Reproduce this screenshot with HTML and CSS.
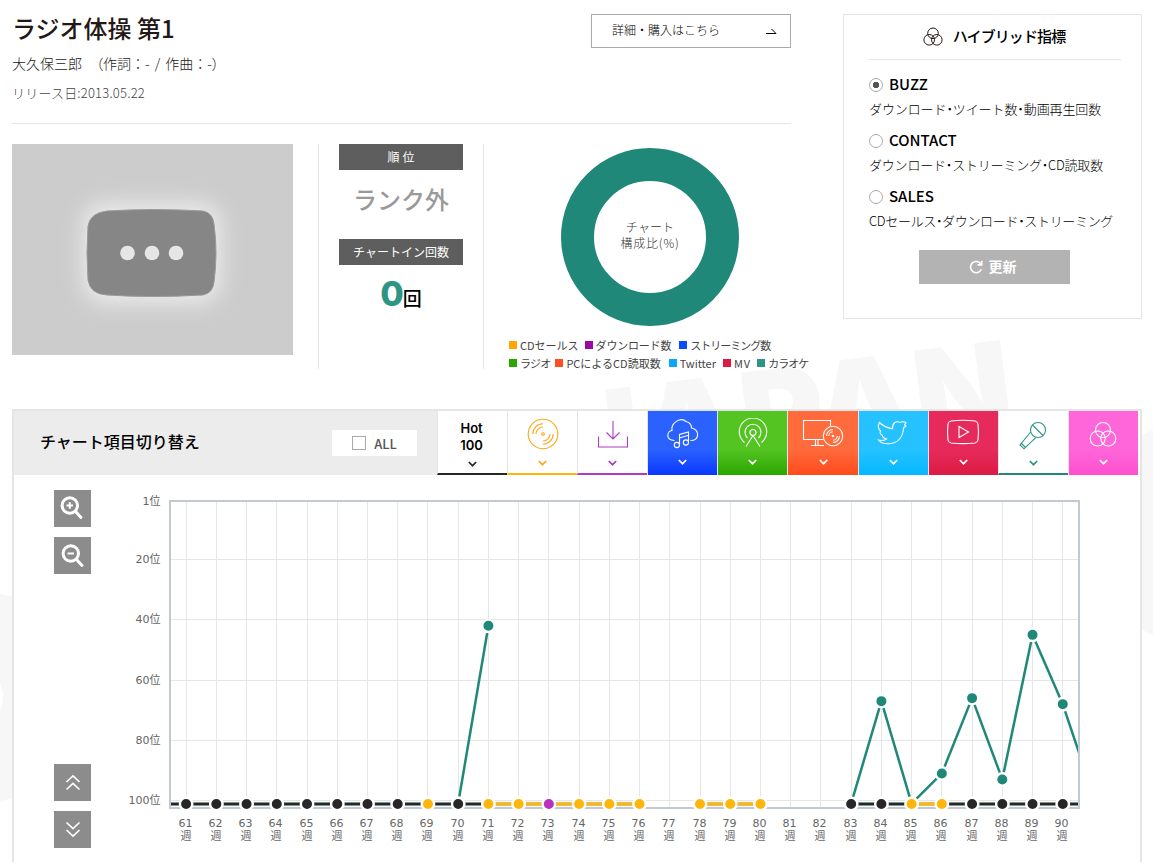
FILE: index.html
```html
<!DOCTYPE html>
<html lang="ja">
<head>
    <meta charset="UTF-8">
    <meta name="viewport" content="width=device-width, initial-scale=1.0">
    <title>ラジオ体操 第1</title>
    <link rel="stylesheet" href="styles.css">
</head>
<body>

    <!-- background logo -->
    <svg class="watermark" viewBox="0 0 1153 862">
        <text x="572" y="488" transform="rotate(-7.2 572 488)" textLength="449">JAPAN</text>
        <path d="M0 594Q8 595 20 600V796Q10 800 0 801V711Q6 697 0 683Z"/>
        <path d="M1153 430Q1130 440 1120 460V610Q1135 628 1153 635Z"/>
    </svg>

    <div class="page">
        <div class="top">
            <div class="song">
                <div class="song-head">
                    <div>
                        <h1>ラジオ体操 第1</h1>
                        <p class="artist">大久保三郎　<span>（</span>作詞：- / 作曲：-<span>）</span></p>
                        <p class="release">リリース日:2013.05.22</p>
                    </div>
                    <a class="buy"><span>詳細・購入はこちら</span>
                        <svg width="11" height="7" viewBox="0 0 11 7"><path d="M0 5.5H10L5.5 1"/></svg>
                    </a>
                </div>
                <div class="song-body">
                    <div class="thumb">
                        <svg width="281" height="211" viewBox="0 0 281 211">
                            <defs><filter id="glow" x="-50%" y="-50%" width="200%" height="200%"><feGaussianBlur stdDeviation="11"/></filter></defs>
                            <rect width="281" height="211" fill="#ccc"/>
                            <rect x="72" y="60" width="136" height="98" rx="20" fill="#eee" filter="url(#glow)"/>
                            <path d="M95 67Q140 64 191 67Q201 69 202 80Q206 109 202 138Q201 149 191 151Q140 154 95 151Q78 150 76 136Q74 109 76 82Q78 69 95 67Z" fill="#868686" stroke="#9a9a9a"/>
                            <g fill="#e6e6e6"><circle cx="115.500" cy="109" r="7.3"/><circle cx="140" cy="109" r="7.3"/><circle cx="164" cy="109" r="7.3"/></g>
                        </svg>
                    </div>
                    <div class="rank">
                        <div class="label wide">順位</div>
                        <div class="out">ランク外</div>
                        <div class="label">チャートイン回数</div>
                        <div class="count"><b>0</b>回</div>
                    </div>
                    <div class="ratio">
                        <div class="donut">チャート<br><span>構成比(%)</span></div>
                        <ul class="legend">
                            <li class="cd">CDセールス</li><li class="dl">ダウンロード数</li><li class="st">ストリーミング数</li>
                        </ul>
                        <ul class="legend second">
                            <li class="ra">ラジオ</li><li class="pc">PCによるCD読取数</li><li class="tw">Twitter</li><li class="mv">MV</li><li class="ka">カラオケ</li>
                        </ul>
                    </div>
                </div>
            </div>

            <div class="hybrid">
                <h2>
                    <svg width="20" height="20" viewBox="0 0 20 20"><circle cx="10" cy="6.3" r="5.3"/><circle cx="6.2" cy="12.8" r="5.3"/><circle cx="13.8" cy="12.8" r="5.3"/></svg>
                    <span>ハイブリッド指標</span>
                </h2>
                <label><i class="radio on"></i>BUZZ</label>
                <p class="d1">ダウンロード<i>・</i>ツイート数<i>・</i>動画再生回数</p>
                <label><i class="radio"></i>CONTACT</label>
                <p class="d2">ダウンロード<i>・</i>ストリーミング<i>・</i>CD読取数</p>
                <label><i class="radio"></i>SALES</label>
                <p class="d3">CDセールス<i>・</i>ダウンロード<i>・</i>ストリーミング</p>
                <div class="update">
                    <svg width="14" height="14" viewBox="0 0 14 14"><path d="M12.3 9.2A5.6 5.6 0 1 1 12 4.3M12.7 .8V4.9H8.6"/></svg>
                    <span>更新</span>
                </div>
            </div>
        </div>

        <div class="panel">
            <div class="panel-head">
                <div class="switch">
                    <h3>チャート項目切り替え</h3>
                    <div class="all"><i></i>ALL</div>
                </div>
                <div class="tab t-hot"><b>Hot<br>100</b><svg class="arw" viewBox="0 0 8 5"><path d="M.7 .7L4 4 7.3 .7"/></svg></div>
                <div class="tab t-cd">
                    <svg class="ic" viewBox="0 0 42 32"><circle cx="21" cy="16" r="14.8"/><circle cx="21" cy="16" r="1.3"/><path d="M10.8 16A10.2 10.2 0 0 1 21 5.8M14 16A7 7 0 0 1 21 9M31.200 16A10.200 10.200 0 0 1 21 26.200M28 16A7 7 0 0 1 21 23"/></svg>
                    <svg class="arw" viewBox="0 0 8 5"><path d="M.7 .7L4 4 7.3 .7"/></svg>
                </div>
                <div class="tab t-dl">
                    <svg class="ic" viewBox="0 0 42 32"><path d="M21 3V21M14.500 14.500L21 21 27.500 14.500M6.500 18.500V29H35.500V18.500"/></svg>
                    <svg class="arw" viewBox="0 0 8 5"><path d="M.7 .7L4 4 7.3 .7"/></svg>
                </div>
                <div class="tab fill t-st">
                    <svg class="ic" viewBox="0 0 42 32"><path d="M12.500 22.500C3 22 5 13 10 12.500C9 4 19 -1 24 3.500C28 4.500 29.500 7 29.500 10C38 12 37.500 22.500 28.500 22.500M17.500 27V16.500L26.500 14V24M17.500 20L26.500 17.300"/><circle cx="14.900" cy="27" r="2.600"/><circle cx="23.900" cy="24.500" r="2.600"/></svg>
                    <svg class="arw" viewBox="0 0 8 5"><path d="M.7 .7L4 4 7.3 .7"/></svg>
                </div>
                <div class="tab fill t-ra">
                    <svg class="ic" viewBox="0 0 42 32"><circle cx="21" cy="14.500" r="3"/><path d="M14 28.500L21 17.500 28 28.500M15.500 20A8 8 0 1 1 26.500 20M12.500 24.500A13.700 13.700 0 1 1 29.500 24.500"/></svg>
                    <svg class="arw" viewBox="0 0 8 5"><path d="M.7 .7L4 4 7.3 .7"/></svg>
                </div>
                <div class="tab fill t-pc">
                    <svg class="ic" viewBox="0 0 42 32"><path d="M21.500 21.500H1.500V2.500H28.500V8M13.500 21.500V27.500M16 21.500V27.500M9 27.500H22"/><circle cx="31" cy="18" r="9.700"/><circle cx="31" cy="18" r=".8"/><path d="M24.500 18A6.500 6.500 0 0 1 31 11.500M26.800 18A4.200 4.200 0 0 1 31 13.800M37.500 18A6.500 6.500 0 0 1 31 24.500M35.200 18A4.200 4.200 0 0 1 31 22.200"/></svg>
                    <svg class="arw" viewBox="0 0 8 5"><path d="M.7 .7L4 4 7.3 .7"/></svg>
                </div>
                <div class="tab fill t-tw">
                    <svg class="ic" viewBox="0 0 42 32"><path d="M6.500 22C10 23 12.500 22.500 14.500 21C11.500 20 10 18.500 10.500 17.500C8 16 7.500 14 8.500 13C6 10.500 6 7 7.500 4.500C11 8 15 10 20.500 10.800C20 5 24 2.500 28 4.500C30 3.500 32 3.500 34 4.500L32.500 7L34 8L31.500 10C31 19 26 25.500 16 25.800C12 25.800 8.500 25 6.500 22Z"/></svg>
                    <svg class="arw" viewBox="0 0 8 5"><path d="M.7 .7L4 4 7.3 .7"/></svg>
                </div>
                <div class="tab fill t-mv">
                    <svg class="ic" viewBox="0 0 42 32"><path d="M9 3Q21 1.500 33 3Q35.500 3.500 36 6Q37 14 36 22Q35.500 24.500 33 25Q21 26.300 9 25Q6.500 24.500 6 22Q5 14 6 6Q6.500 3.500 9 3ZM17 8.500V19.500L26.500 14Z"/></svg>
                    <svg class="arw" viewBox="0 0 8 5"><path d="M.7 .7L4 4 7.3 .7"/></svg>
                </div>
                <div class="tab t-ka">
                    <svg class="ic" viewBox="0 0 42 32"><circle cx="26" cy="12" r="7.500"/><path d="M20.500 7L31 17.500M18.700 14L8 27 12 30.800 24 19.300M9.500 25.500L13.500 29.500"/></svg>
                    <svg class="arw" viewBox="0 0 8 5"><path d="M.7 .7L4 4 7.3 .7"/></svg>
                </div>
                <div class="tab fill t-hy">
                    <svg class="ic" viewBox="0 0 42 32"><circle cx="21" cy="12" r="7.500"/><circle cx="15.700" cy="20.500" r="7.500"/><circle cx="26.300" cy="20.500" r="7.500"/></svg>
                    <svg class="arw" viewBox="0 0 8 5"><path d="M.7 .7L4 4 7.3 .7"/></svg>
                </div>
            </div>

            <div class="panel-body">
                <div class="tools">
                    <div class="tool"><svg class="mag" viewBox="0 0 37 37"><circle cx="15.800" cy="15.500" r="7.700"/><path d="M21.500 21.500L27 27.500"/><path class="thin" d="M12.500 15.500H19M15.800 12.300V18.800"/></svg></div>
                    <div class="tool"><svg class="mag" viewBox="0 0 37 37"><circle cx="16.800" cy="16.500" r="7.700"/><path d="M22.500 22.500L28 28.500"/><path class="thin" d="M13.500 16.500H20"/></svg></div>
                    <div class="tool up"><svg viewBox="0 0 37 37"><path d="M12.500 18L19 11.800 25.500 18M12.500 25.500L19 19.300 25.500 25.500"/></svg></div>
                    <div class="tool"><svg viewBox="0 0 37 37"><path d="M12.500 11.500L19 17.700 25.500 11.500M12.500 19L19 25.200 25.500 19"/></svg></div>
                </div>
                <svg id="chart" width="980" height="370" viewBox="120 490 980 370"></svg>
            </div>
        </div>
    </div>

    <script>
        const startWeek = 61;
        const endWeek = 90;
        // dots on the out-of-rank line: k = Hot 100, y = CD sales, p = download, - = no data
        const base = 'kkkkkkkkykyypyyy-yyy--kkyykkkkk';
        const colors = { k: '#272727', y: '#ffb60a', p: '#b92fc2' };
        const karaoke = [
            [[70, 101], [71, 42]],
            [[83, 101], [84, 67], [85, 101], [86, 91], [87, 66], [88, 93], [89, 45], [90, 68], [91, 98]]
        ];

        const px = week => 186.1 + (week - startWeek) * 30.23;
        const py = rank => 499.3 + rank * 3.0125;
        const line = (x1, y1, x2, y2, color, w) =>
            `<line x1="${x1}" y1="${y1}" x2="${x2}" y2="${y2}" stroke="${color}" stroke-width="${w}"/>`;
        const dot = (x, y, color) =>
            `<circle cx="${x}" cy="${y}" r="6.2" fill="${color}" stroke="#fff" stroke-width="2.400"/>`;

        let out = '<defs><clipPath id="plot"><rect x="171" y="500" width="907" height="320"/></clipPath></defs>';
        out += '<rect x="170" y="501" width="909" height="307" fill="#fff" stroke="#c3c9d3" stroke-width="2"/>';
        for (let w = startWeek; w <= endWeek; w++) {
            const x = Math.floor(px(w)) + 0.5;
            out += line(x, 502, x, 807, '#e6e6e6', 1);
            out += `<text x="${x - 1}" y="827" text-anchor="middle">${w}</text>`;
            out += `<text x="${x - 0.5}" y="840" text-anchor="middle">週</text>`;
        }
        [1, 20, 40, 60, 80, 100].forEach(r => {
            const y = Math.floor(py(r)) + 0.5;
            if (r > 1) out += line(171, y, 1078, y, '#e6e6e6', 1);
            out += `<text x="160.500" y="${r > 1 ? y + 3 : 505}" text-anchor="end">${r}位</text>`;
        });

        out += '<g clip-path="url(#plot)">';
        // segments stop short of each dot
        const seg = (x1, y1, x2, y2, color, w) => {
            const len = Math.hypot(x2 - x1, y2 - y1);
            const dx = (x2 - x1) / len * 7, dy = (y2 - y1) / len * 7;
            return line(x1 + dx, y1 + dy, x2 - dx, y2 - dy, color, w);
        };
        const baseY = 804;
        out += line(171, baseY, px(61) - 7, baseY, '#a8c8c2', 4) + line(171, baseY, px(61) - 7, baseY, colors.k, 2.6);
        for (let i = 0; i < base.length - 1; i++) {
            if (base[i] === '-' || base[i + 1] === '-') continue;
            const w = startWeek + i;
            const yellow = (w >= 71 && w < 80) || w === 85;
            out += seg(px(w), baseY, px(w + 1), baseY, '#fff', 6);
            out += seg(px(w), baseY, px(w + 1), baseY, yellow ? '#d5c08a' : '#a9c3bf', 4.2);
            out += seg(px(w), baseY, px(w + 1), baseY, yellow ? colors.y : colors.k, 2.6);
        }
        karaoke.forEach(run => {
            for (let i = 0; i < run.length - 1; i++) {
                out += seg(px(run[i][0]), py(run[i][1]), px(run[i + 1][0]), py(run[i + 1][1]), '#1f8879', 2.5);
            }
            run.forEach(([w, r]) => { if (w <= endWeek && r < 101) out += dot(px(w), py(r), '#1f8879'); });
        });
        for (let i = 0; i < base.length - 1; i++) {
            if (base[i] !== '-') out += dot(px(startWeek + i), baseY, colors[base[i]]);
        }
        out += '</g>';
        document.getElementById('chart').innerHTML = out;
    </script>
</body>
</html>
```
FILE: styles.css
```css
* { box-sizing: border-box; }
body { margin: 0; height: 862px; overflow: hidden; background: #fff; color: #231815; font-family: "Noto Sans CJK JP", sans-serif; }
h1, h2, h3, p, ul { margin: 0; padding: 0; }
svg { display: block; fill: none; }

.watermark { position: absolute; left: 0; top: 0; width: 1153px; height: 862px; z-index: -1; fill: #f7f7f7; }
.watermark text { font: 900 128px Inter, sans-serif; }

.page { width: 1130px; margin-left: 12px; padding-top: 14px; }
.top { display: flex; justify-content: space-between; height: 395px; }

/* song info */
.song { width: 779px; }
.song-head { display: flex; justify-content: space-between; height: 110px; border-bottom: 1px solid #e5e5e5; }
h1 { font-size: 24px; font-weight: 500; line-height: 28px; }
.artist { margin-top: 11px; font-size: 14px; font-weight: 300; line-height: 20px; word-spacing: 2px; }
.artist span { font-feature-settings: "palt"; }
.release { margin-top: 10px; font-size: 13px; font-weight: 300; line-height: 20px; letter-spacing: .2px; color: #444; }
.buy { display: flex; align-items: center; justify-content: space-between; width: 200px; height: 34px; padding: 0 13px 3px 20px; border: 1px solid #aaa; font-size: 12px; font-weight: 300; color: #000; }
.buy svg { stroke: #000; margin-top: 4px; }

.song-body { display: flex; margin-top: 20px; }
.thumb { flex: none; width: 281px; height: 211px; }
.rank { flex: none; width: 166px; height: 225px; margin-left: 25px; padding: 0 20px; border-left: 1px solid #e5e5e5; border-right: 1px solid #e5e5e5; text-align: center; }
.label { height: 26px; background: #5e5e5e; color: #fff; font-size: 12px; line-height: 25px; }
.label.wide { letter-spacing: 3px; padding-left: 3px; }
.out { height: 69px; padding-top: 2px; font-size: 24px; font-weight: 500; line-height: 54px; color: #999; }
.count { display: flex; align-items: baseline; justify-content: center; padding-top: 5px; font-size: 19px; font-weight: 500; line-height: 48px; color: #000; }
.count b { margin-right: -1px; font: 800 34px/48px Inter, sans-serif; color: #2c9583; }

.ratio { flex: none; width: 283px; margin-left: 25px; }
.donut { width: 178px; height: 178px; margin: 3.500px 0 0 52px; padding-top: 38px; border: 33px solid #1f8879; border-radius: 50%; text-align: center; font-size: 12px; line-height: 16px; color: #333; font-weight: 300; white-space: nowrap; }
.donut span { letter-spacing: .8px; }
.legend { display: flex; margin-top: 11.500px; list-style: none; font-size: 11px; line-height: 16px; color: #444; white-space: nowrap; }
.legend.second { margin-top: 2px; }
.legend li { display: flex; align-items: center; margin-right: 6px; }
.legend li::before { content: ""; width: 8px; height: 8px; margin-right: 3px; background: #ffa600; }
.legend .dl { letter-spacing: -.2px; margin-right: 8px; }
.legend .st { letter-spacing: -1px; }
.legend .ra { margin-right: 5px; letter-spacing: -.8px; }
.legend .pc { margin-right: 8px; }
.legend .tw { margin-right: 7px; }
.legend .mv { margin-right: 6px; letter-spacing: 1px; }
.legend .ka { letter-spacing: -1px; }
.legend .dl::before { background: #990aa3; }
.legend .st::before { background: #0a4bff; }
.legend .ra::before { background: #29a800; }
.legend .pc::before { background: #ff4e20; }
.legend .tw::before { background: #0aa6ff; }
.legend .mv::before { background: #dc1845; }
.legend .ka::before { background: #2c9583; }

/* hybrid index box */
.hybrid { width: 299px; height: 305px; padding: 0 20px 0 25px; border: 1px solid #e5e5e5; background: #fff; color: #000; }
.hybrid h2 { display: flex; align-items: center; justify-content: center; gap: 10px; height: 45px; padding: 0 2px 3px 0; border-bottom: 1px solid #e5e5e5; font-size: 15px; font-weight: 500; letter-spacing: -.9px; }
.hybrid h2 svg { stroke: #231815; margin-top: 2px; }
.hybrid label { display: flex; align-items: center; height: 20px; margin-top: 13px; font-size: 15px; font-weight: 500; }
.hybrid label ~ label { margin-top: 14px; }
.hybrid p { height: 20px; margin-top: 2px; font-size: 13px; font-weight: 300; line-height: 28px; white-space: nowrap; }
.hybrid p i { font-style: normal; font-feature-settings: "halt"; }
.d1 { letter-spacing: -.1px; }
.d2 { letter-spacing: -.2px; }
.d3 { letter-spacing: -.33px; }
.radio { width: 14px; height: 14px; margin: 4px 6px 0 0; border: 1px solid #aaa; border-radius: 50%; }
.radio.on { background: radial-gradient(circle, #555 3px, transparent 3.5px); }
.update { display: flex; align-items: center; justify-content: center; gap: 6px; width: 151px; height: 34px; margin: 23px 0 0 50px; background: #b3b3b3; color: #fff; font-size: 14px; font-weight: 700; }
.update svg { margin-left: -4px; stroke: #fff; stroke-width: 1.6; }
.update span { padding-bottom: 2px; }

/* chart panel */
.panel { height: 453px; border: 2px solid #e5e5e5; border-bottom: 0; background: #fff; }
.panel-head { display: flex; height: 64px; padding-right: 2px; }
.switch { display: flex; align-items: center; justify-content: space-between; width: 423px; padding: 0 20px 0 26px; background: #ececec; }
.switch h3 { padding-bottom: 4px; font-size: 16px; font-weight: 500; color: #000; }
.all { display: flex; align-items: center; justify-content: center; width: 85px; height: 26px; border-radius: 1px; background: #fff; font-size: 13px; font-weight: 500; color: #555; }
.all i { width: 14px; height: 14px; margin-right: 8px; border: 1px solid #aaa; }

.tab { display: flex; flex: 1; flex-direction: column; align-items: center; border-left: 1px solid #e5e5e5; stroke: #fff; stroke-width: 1.1; }
.tab b { height: 50px; padding: 9px 2px 0 0; font: 600 13px/17px Inter, sans-serif; text-align: center; color: #000; stroke: none; }
.tab .ic { width: 42px; height: 32px; margin: 7px 0 10px; }
.tab .arw { width: 9px; height: 6px; margin-top: 0; stroke-width: 1.5; }
.tab.fill .arw { margin-top: -1px; }
.t-hot { border-bottom: 2px solid #272727; stroke: #272727; }
.t-cd { border-bottom: 2px solid #ffb60a; stroke: #ffa61a; }
.t-dl { border-bottom: 2px solid #b03ac0; stroke: #b03ac0; }
.t-ka { border-bottom: 2px solid #1f8879; stroke: #2c9583; }
.t-st { background: linear-gradient(#2b62ff 60%, #0a37ff); }
.t-ra { background: linear-gradient(#54c422 60%, #2ba600); }
.t-pc { background: linear-gradient(#ff6b3d 60%, #ff4a1c); }
.t-tw { background: linear-gradient(#26c2ff 60%, #05b8ff); }
.t-mv { background: linear-gradient(#e62a5c 60%, #dc1b42); }
.t-hy { background: linear-gradient(#ff66d9 60%, #ff4fd0); }

.panel-body { display: flex; padding: 15px 0 0 40px; }
.tools { width: 66px; }
.tool { width: 37px; height: 37px; margin-bottom: 10px; background: #8c8c8c; }
.tool.up { margin-top: 190px; }
.tool svg { stroke: #fff; stroke-width: 1.6; }
.tool .mag { stroke-width: 3; stroke-linecap: round; }
.tool .mag .thin { stroke-width: 2; stroke-linecap: butt; }
#chart text { fill: #666; font: 11px "DejaVu Sans", "Noto Sans CJK JP", sans-serif; }
```
